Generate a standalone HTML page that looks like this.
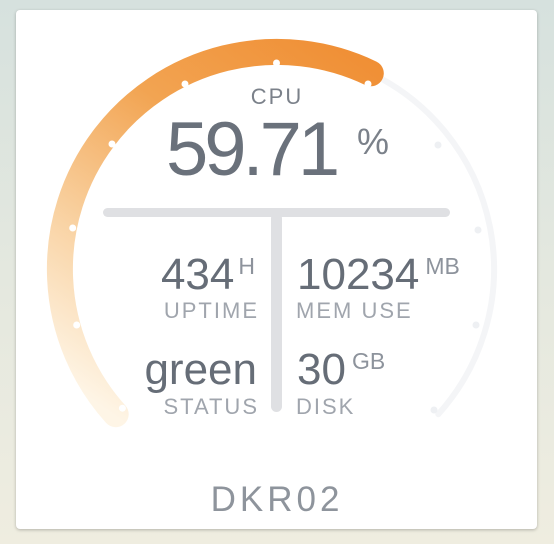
<!DOCTYPE html>
<html><head><meta charset="utf-8"><style>
html,body{margin:0;padding:0}
body{width:554px;height:544px;overflow:hidden;background:linear-gradient(180deg,#d6e1de 0%,#e4e8df 50%,#efede0 100%);font-family:"Liberation Sans",sans-serif;position:relative}
.card{position:absolute;left:16px;top:10px;width:521px;height:519px;background:#fff;border-radius:4px;box-shadow:0 1px 3px rgba(0,0,0,.25)}
.t{position:absolute;white-space:nowrap;line-height:1}
.v{color:#666d77;font-size:44px;letter-spacing:0}
.u{color:#8d939c;font-size:23px}
.l{color:#a0a5ad;font-size:22px;letter-spacing:2px}
</style></head><body>
<div class="card"></div>
<svg width="554" height="544" style="position:absolute;left:0;top:0">
<defs><linearGradient id="g" gradientUnits="userSpaceOnUse" x1="370" y1="60" x2="120" y2="420">
<stop offset="0" stop-color="#f08f35"/><stop offset="0.35" stop-color="#f2a452"/><stop offset="0.7" stop-color="#f9d3a4"/><stop offset="1" stop-color="#fef5e6"/></linearGradient></defs>
<path d="M370.8 73.3 A217 217 0 0 1 438.3 414.2" fill="none" stroke="#f4f5f7" stroke-width="6" stroke-linecap="round"/>
<path d="M115.7 414.2 A217 217 0 0 1 370.8 73.3" fill="none" stroke="url(#g)" stroke-width="26" stroke-linecap="round"/>
<g fill="#fff">
<circle cx="122.4" cy="408.2" r="3.5"/><circle cx="76.7" cy="325" r="3.5"/><circle cx="72.7" cy="228" r="3.5"/><circle cx="112" cy="144" r="3.5"/><circle cx="185" cy="84" r="3.5"/><circle cx="276.5" cy="63" r="3.5"/><circle cx="368" cy="84" r="3.5"/></g>
<g fill="#eef0f3"><circle cx="438" cy="145" r="3.5"/><circle cx="478" cy="230" r="3.5"/><circle cx="476" cy="325" r="3.5"/><circle cx="434" cy="410" r="3.5"/></g>
<rect x="103" y="208" width="347" height="9" rx="4.5" fill="#dfe0e3"/>
<rect x="271" y="213" width="11" height="199" rx="5.5" fill="#dfe0e3"/>
</svg>
<div class="t" style="left:0;width:554px;text-align:center;top:86px;color:#7b818a;font-size:22px;letter-spacing:2px">CPU</div>
<div class="t" style="left:166px;top:112px;color:#6a717b;font-size:76px;letter-spacing:-4px">59.71</div>
<div class="t" style="left:357px;top:124px;color:#7b818a;font-size:36px">%</div>

<div class="t" style="right:299px;top:253px"><span class="v">434</span><span class="u" style="vertical-align:15px;margin-left:4px">H</span></div>
<div class="t l" style="right:295px;top:300px">UPTIME</div>
<div class="t" style="right:297px;top:348px"><span class="v" style="letter-spacing:0">green</span></div>
<div class="t l" style="right:295px;top:396px">STATUS</div>

<div class="t" style="left:297px;top:253px"><span class="v">10234</span><span class="u" style="vertical-align:15px;margin-left:6px">MB</span></div>
<div class="t l" style="left:296px;top:300px">MEM USE</div>
<div class="t" style="left:297px;top:348px"><span class="v">30</span><span class="u" style="vertical-align:15px;margin-left:6px">GB</span></div>
<div class="t l" style="left:296px;top:396px">DISK</div>

<div class="t" style="left:0;width:554px;text-align:center;top:482px;color:#8e949c;font-size:35px;letter-spacing:4px">DKR02</div>
</body></html>
